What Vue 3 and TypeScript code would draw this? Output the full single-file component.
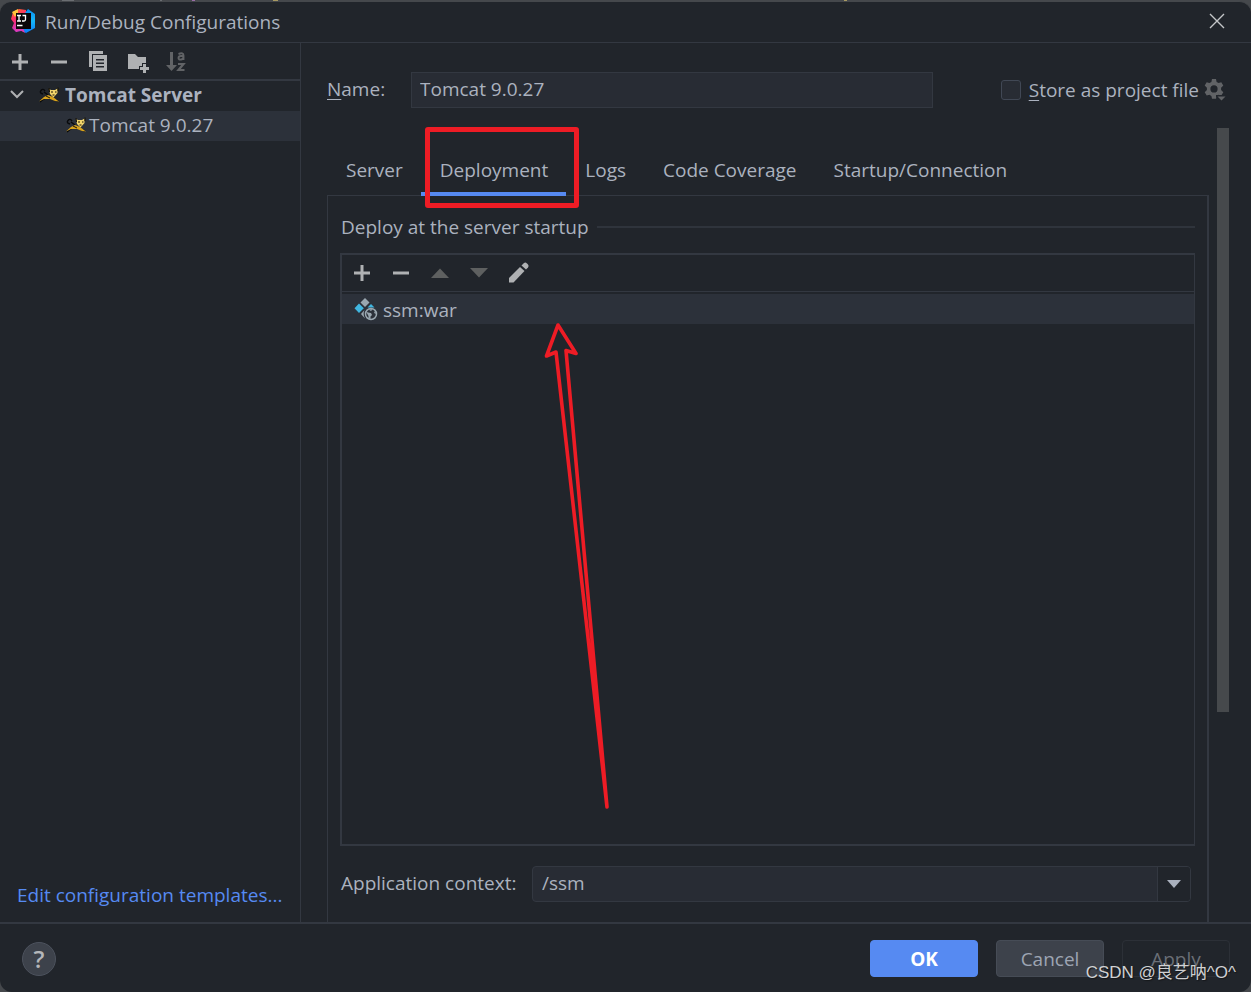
<script setup lang="ts">
import { ref } from 'vue'

const tabs: string[] = ['Server', 'Deployment', 'Logs', 'Code Coverage', 'Startup/Connection']
const activeTab = ref<string>('Deployment')
const configName = ref<string>('Tomcat 9.0.27')
const contextPath = ref<string>('/ssm')
const storeAsFile = ref<boolean>(false)
</script>

<template>
  <div class="screen">
    <div class="behind" aria-hidden="true"><i class="m1"></i><i class="m2"></i><i class="m3"></i><i class="m4"></i><i class="m5"></i></div>
    <div class="dialog">
      <header class="titlebar">
        <svg class="logo" width="26" height="26" viewBox="0 0 26 26" aria-hidden="true">
          <defs>
            <linearGradient id="ij-warm" x1="0" y1="0" x2="0.4" y2="1">
              <stop offset="0" stop-color="#fc801d" />
              <stop offset="0.45" stop-color="#fe2d6a" />
              <stop offset="1" stop-color="#c13bd6" />
            </linearGradient>
            <linearGradient id="ij-cool" x1="0" y1="0" x2="0" y2="1">
              <stop offset="0" stop-color="#0a8ef0" />
              <stop offset="0.5" stop-color="#16b7f8" />
              <stop offset="1" stop-color="#087cfa" />
            </linearGradient>
          </defs>
          <path d="M3 3 9 0 16 1 17 23 11 22 6 23 2 19 4 14 1 10Z" fill="url(#ij-warm)" />
          <path d="M2 3 8 0 8 4 5 8Z" fill="#ffc53b" />
          <path d="M15 4 18 0 25 5 25 19 16 24 11 21 15 17Z" fill="url(#ij-cool)" />
          <path d="M5 19 13 19 15 24 10 21 6 23Z" fill="#e33bb0" />
          <rect x="6" y="4" width="15" height="16" fill="#0b0609" />
          <path d="M7 6.500H11M9 6.500V12M7 12H11M12.500 6.500H15.500V10.500Q15.500 12 14 12H12M7 16.500H12.500" fill="none" stroke="#fff" stroke-width="1.300" />
        </svg>
        <h1>Run/Debug Configurations</h1>
        <button class="icon-btn close" type="button" aria-label="Close">
          <svg width="16" height="16" viewBox="0 0 16 16"><path d="M1 1 15 15M15 1 1 15" stroke="#c4c6c9" stroke-width="1.400" fill="none" /></svg>
        </button>
      </header>

      <div class="body">
        <aside class="sidebar">
          <div class="side-tools">
            <button class="icon-btn" type="button" aria-label="Add">
              <svg width="24" height="24" viewBox="0 0 24 24"><path d="M12 4V20M4 12H20" stroke="#afb1b3" stroke-width="3" /></svg>
            </button>
            <button class="icon-btn" type="button" aria-label="Remove">
              <svg width="24" height="24" viewBox="0 0 24 24"><path d="M4 12H20" stroke="#afb1b3" stroke-width="3" /></svg>
            </button>
            <button class="icon-btn" type="button" aria-label="Copy">
              <svg width="24" height="24" viewBox="0 0 24 24">
                <path d="M3 1H17V4H6V17H3Z" fill="#afb1b3" />
                <path fill-rule="evenodd" d="M7 5H21V21H7ZM10 9V10.500H18V9ZM10 12.500V14H18V12.500ZM10 16V17.500H18V16Z" fill="#afb1b3" />
              </svg>
            </button>
            <button class="icon-btn" type="button" aria-label="New folder">
              <svg width="24" height="24" viewBox="0 0 24 24">
                <path d="M3 4H10L13 7H21V13H17V16H14V19H3Z" fill="#afb1b3" />
                <path d="M19.500 14V23M15 18.500H24" stroke="#afb1b3" stroke-width="3" />
              </svg>
            </button>
            <button class="icon-btn" type="button" aria-label="Sort alphabetically" disabled>
              <svg width="24" height="24" viewBox="0 0 24 24" fill="none" stroke="#616366">
                <path d="M7.500 2V16" stroke-width="3" />
                <path d="M2 15H13L7.500 21Z" fill="#616366" stroke="none" />
                <path d="M14.500 4Q19.500 2 19.500 5.500V10M19.500 6H17Q14.500 6 14.500 8T17 9.500Q19 9.500 19 7.500" stroke-width="1.900" />
                <path d="M14 14H19.500L14.500 20H20.500" stroke-width="2.200" />
              </svg>
            </button>
          </div>

          <svg class="symbols" width="0" height="0" aria-hidden="true">
            <symbol id="tomcat" viewBox="0 0 20 16">
              <path d="M4 7Q0 6 2 3.500T6 4M5 5 9 8M1 15 6 11M14 12 19 14" stroke="#08090b" stroke-width="1.400" fill="none" />
              <path d="M0 14.500 5 10 9 8 14 10 20 14.500 16 14 11 12 5 12Z" fill="#d9a31c" />
              <path d="M10 2 12 3H16L18.500 1.500 18.500 6 14.500 10.500 11 7Z" fill="#f2d56c" />
              <path d="M10 1 10.500 5M19 0.500V4M12 5H14M16 5H17.500M13.500 8H15.500" stroke="#191305" stroke-width="1.100" />
              <path d="M7 9 11 11" stroke="#17120a" stroke-width="1" />
            </symbol>
          </svg>
          <ul class="tree">
            <li>
              <div class="tree-row group">
                <button class="icon-btn chevron" type="button" aria-label="Collapse Tomcat Server" aria-expanded="true">
                  <svg width="14" height="14" viewBox="0 0 14 14"><path d="M1 3 7 9 13 3" stroke="#afb1b3" stroke-width="2" fill="none" /></svg>
                </button>
                <svg width="20" height="16"><use href="#tomcat" /></svg>
                <span>Tomcat Server</span>
              </div>
              <ul class="tree">
                <li class="tree-row leaf">
                  <svg width="20" height="16"><use href="#tomcat" /></svg>
                  <span>Tomcat 9.0.27</span>
                </li>
              </ul>
            </li>
          </ul>
          <a class="templates" href="#">Edit configuration templates...</a>
        </aside>

        <main class="content">
          <div class="name-row">
            <label class="name-label" for="config-name"><u>N</u>ame:</label>
            <input id="config-name" v-model="configName" class="text-field" type="text" />
            <div class="store">
              <input id="store-file" v-model="storeAsFile" type="checkbox" />
              <label for="store-file"><u>S</u>tore as project file</label>
              <button class="icon-btn" type="button" aria-label="Storage options">
                <svg width="22" height="22" viewBox="0 0 22 22">
                  <g fill="#616366">
                    <path fill-rule="evenodd" d="M8 0H12L12.600 3 14.600 4.100 17.300 3.200 19.300 6.600 17.100 8.700V11.100L19.300 13.200 17.300 16.600 14.600 15.700 12.600 16.900 12 19.800H8L7.400 16.900 5.400 15.700 2.700 16.600 0.700 13.200 2.900 11.100V8.700L0.700 6.600 2.700 3.200 5.400 4.100 7.400 3ZM10 6.300A3.600 3.600 0 1 0 10 13.500A3.600 3.600 0 1 0 10 6.300Z" />
                    <path d="M12 16H22V18L17.500 22 12 18Z" fill="#21252b" />
                    <path d="M13.500 17.500H21.500L17.500 21.500Z" />
                  </g>
                </svg>
              </button>
            </div>
          </div>

          <div class="scroll-area">
            <div class="pane">
              <div class="tabs" role="tablist">
                <button
                  v-for="tab in tabs"
                  :key="tab"
                  class="tab"
                  :class="{ active: tab === activeTab }"
                  type="button"
                  role="tab"
                  :aria-selected="tab === activeTab"
                  @click="activeTab = tab"
                >
                  {{ tab }}
                  <span v-if="tab === 'Deployment'" class="red-box"></span>
                </button>
              </div>

              <section class="panel">
                <h2>Deploy at the server startup</h2>
                <div class="deploy-box">
                  <div class="deploy-tools">
                    <button class="icon-btn" type="button" aria-label="Add artifact">
                      <svg width="24" height="24" viewBox="0 0 24 24"><path d="M12 4V20M4 12H20" stroke="#afb1b3" stroke-width="3" /></svg>
                    </button>
                    <button class="icon-btn" type="button" aria-label="Remove artifact">
                      <svg width="24" height="24" viewBox="0 0 24 24"><path d="M4 12H20" stroke="#afb1b3" stroke-width="3" /></svg>
                    </button>
                    <button class="icon-btn" type="button" aria-label="Move up" disabled>
                      <svg width="24" height="24" viewBox="0 0 24 24"><path d="M3 17 12 7.500 21 17Z" fill="#5e6060" /></svg>
                    </button>
                    <button class="icon-btn" type="button" aria-label="Move down" disabled>
                      <svg width="24" height="24" viewBox="0 0 24 24"><path d="M3 7H21L12 16.500Z" fill="#5e6060" /></svg>
                    </button>
                    <button class="icon-btn" type="button" aria-label="Edit artifact">
                      <svg width="24" height="24" viewBox="0 0 24 24" fill="#afb1b3">
                        <path d="M3 17 14 6 18.500 10 7.500 21.500H3Z" />
                        <path d="M15.500 4.500 18 2Q19.500 1 21 2.500L22 3.500Q23.300 5 22 6.500L20 8.500Z" />
                      </svg>
                    </button>
                  </div>
                  <ul class="artifacts">
                    <li>
                      <svg width="24" height="24" viewBox="0 0 24 24" aria-hidden="true">
                        <path d="M11 0 15.500 4.500 11 9 6.500 4.500Z" fill="#9aa7b0" />
                        <path d="M5 5.500 9.800 10.300 5 15 0.500 10.300Z" fill="#40b6e0" />
                        <path d="M17 6 20.500 9.500H13.500Z" fill="#40b6e0" />
                        <path d="M10.500 12Q8.500 16 11 20.500L7 16Z" fill="#9aa7b0" />
                        <circle cx="17" cy="16" r="5.500" fill="#2c313a" stroke="#9aa7b0" stroke-width="1.500" />
                        <path d="M12 13.500 14 14.500 17 15 18 17 16.500 18.500 16.500 21 14.500 20.500 14.500 18ZM14.500 11.500 19 11 17 13ZM21 13 22.500 16 20 15Z" fill="#9aa7b0" />
                      </svg>
                      <span>ssm:war</span>
                    </li>
                  </ul>
                  <svg class="arrow" width="70" height="492" viewBox="0 0 70 492" aria-hidden="true">
                    <path d="M65 487 14 32 4.500 36 16 5 34 33.500 24 30.500Z" fill="none" stroke="#ee1c25" stroke-width="3.600" stroke-linejoin="round" />
                  </svg>
                </div>
                <div class="context-row">
                  <label for="context">Application context:</label>
                  <div class="combo">
                    <input id="context" v-model="contextPath" type="text" />
                    <button type="button" aria-label="Show contexts">
                      <svg width="14" height="8" viewBox="0 0 14 8"><path d="M0 0H14L7 8Z" fill="#abb2bf" /></svg>
                    </button>
                  </div>
                </div>
              </section>
            </div>
            <div class="scrollbar"><div class="thumb"></div></div>
          </div>
        </main>
      </div>

      <footer class="footer">
        <button class="help" type="button" aria-label="Help">?</button>
        <button class="btn primary" type="button">OK</button>
        <button class="btn" type="button">Cancel</button>
        <button class="btn disabled" type="button" disabled>Apply</button>
      </footer>
    </div>
    <div class="watermark">CSDN @良艺呐^O^</div>
  </div>
</template>

<style>
body {
  margin: 0;
  background: #45484c;
}
</style>

<style scoped>
.screen {
  --bg: #21252b;
  --line: #333841;
  --fg: #abb2bf;
  --accent: #568af2;
  position: relative;
  box-sizing: border-box;
  display: flex;
  flex-direction: column;
  min-height: 100vh;
  background: #45484c;
  color: var(--fg);
  font: 19px/28px "Open Sans", "Noto Sans", "Noto Sans CJK SC", sans-serif;
}
.screen *,
.screen *::before,
.screen *::after {
  box-sizing: border-box;
}
.behind {
  display: flex;
  height: 1px;
}
.behind i {
  width: 12px;
  height: 1px;
  background: #6b6e72;
}
.behind .m1 { margin-left: 62px; }
.behind .m2 { margin-left: 86px; width: 2px; }
.behind .m3 { margin-left: 30px; width: 3px; background: #9a6da8; }
.behind .m4 { margin-left: 78px; width: 5px; background: #a89a62; }
.behind .m5 { margin-left: 566px; width: 3px; background: #a89a62; }
button,
input {
  margin: 0;
  padding: 0;
  border: 0;
  background: none;
  color: inherit;
  font: inherit;
  outline: none;
}
svg {
  display: block;
  flex: none;
}
.symbols {
  position: absolute;
}
ul {
  margin: 0;
  padding: 0;
  list-style: none;
}
h1,
h2 {
  margin: 0;
  font-size: 19px;
  font-weight: 400;
}
u {
  text-underline-offset: 3px;
}
.icon-btn {
  display: flex;
  align-items: center;
  justify-content: center;
}
.dialog {
  display: flex;
  flex: 1;
  flex-direction: column;
  border-top: 1px solid #45484c;
  border-radius: 12px;
  background: var(--bg);
  overflow: hidden;
}
.titlebar {
  display: flex;
  align-items: center;
  height: 41px;
  padding: 0 26px 0 10px;
  border-bottom: 1px solid var(--line);
}
.titlebar h1 {
  margin-left: 9px;
}
.close {
  margin-left: auto;
  padding-bottom: 2px;
}
.body {
  display: flex;
  flex: 1;
}
.sidebar {
  display: flex;
  flex-direction: column;
  width: 301px;
  border-right: 1px solid var(--line);
}
.side-tools {
  display: flex;
  gap: 15px;
  align-items: center;
  height: 38px;
  padding: 2px 0 0 8px;
  border-bottom: 2px solid var(--line);
}
.tree-row {
  display: flex;
  align-items: center;
  height: 30px;
  padding-bottom: 2px;
}
.group {
  padding-left: 10px;
  font-weight: 700;
}
.group span {
  margin-left: 6px;
}
.chevron {
  margin-right: 15px;
}
.leaf {
  padding-left: 66px;
  background: #2c313a;
}
.leaf span {
  margin-left: 3px;
}
.templates {
  margin: auto 0 13px 17px;
  color: var(--accent);
  text-decoration: none;
}
.content {
  display: flex;
  flex: 1;
  flex-direction: column;
  min-width: 0;
  padding: 29px 22px 0 26px;
}
.name-row {
  display: flex;
  align-items: center;
}
.name-label {
  width: 84px;
  padding-bottom: 2px;
}
.text-field {
  flex: 1;
  min-width: 0;
  height: 36px;
  padding: 0 8px 2px;
  border: 1px solid var(--line);
  background: #282c34;
}
.store {
  display: flex;
  align-items: center;
  margin: 0 3px 0 68px;
}
.store input {
  width: 20px;
  height: 20px;
  margin-right: 8px;
  border: 1px solid #414855;
  border-radius: 3px;
  background: #282c34;
  appearance: none;
}
.store input:checked {
  background: var(--accent);
}
.store button {
  margin-left: 5px;
}
.scroll-area {
  display: flex;
  flex: 1;
  gap: 8px;
  margin-top: 20px;
}
.pane {
  display: flex;
  flex: 1;
  flex-direction: column;
  min-width: 0;
}
.scrollbar {
  width: 12px;
}
.thumb {
  height: 584px;
  background: #46494c;
}
.tabs {
  display: flex;
  height: 68px;
  padding-top: 20px;
}
.tab {
  position: relative;
  padding: 0 18px 0 19px;
  border-bottom: 4px solid transparent;
}
.tab.active {
  z-index: 1;
  border-bottom-color: var(--accent);
}
.red-box {
  position: absolute;
  top: -21px;
  right: -13px;
  bottom: -16px;
  left: 4px;
  border: 5px solid #ee1c25;
  border-radius: 3px;
}
.panel {
  display: flex;
  flex: 1;
  flex-direction: column;
  margin-top: -1px;
  padding: 17px 12px 20px;
  border: 1px solid var(--line);
  border-right-width: 2px;
  border-bottom: 0;
}
.panel h2 {
  display: flex;
  gap: 8px;
  align-items: center;
  padding-left: 1px;
}
.panel h2::after {
  flex: 1;
  height: 2px;
  background: #2f343c;
  content: "";
}
.deploy-box {
  position: relative;
  flex: 1;
  min-height: 560px;
  margin: 12px 0 20px;
  border: 2px solid var(--line);
  border-right-width: 1px;
}
.deploy-tools {
  display: flex;
  gap: 15px;
  align-items: center;
  height: 37px;
  padding-left: 8px;
  border-bottom: 1px solid var(--line);
}
.artifacts {
  padding-top: 2px;
}
.artifacts li {
  display: flex;
  gap: 5px;
  align-items: center;
  height: 30px;
  padding: 2px 0 0 12px;
  background: #2c313a;
}
.arrow {
  position: absolute;
  top: 65px;
  left: 200px;
}
.context-row {
  display: flex;
  align-items: center;
  padding: 0 4px 0 1px;
}
.context-row label {
  width: 191px;
  padding-bottom: 2px;
}
.combo {
  display: flex;
  flex: 1;
  min-width: 0;
  height: 36px;
  border: 1px solid var(--line);
  border-radius: 4px;
  background: #282c34;
  overflow: hidden;
}
.combo input {
  flex: 1;
  min-width: 0;
  padding: 0 9px 2px;
}
.combo button {
  display: flex;
  align-items: center;
  justify-content: center;
  width: 33px;
  border-left: 1px solid var(--line);
  background: var(--bg);
}
.footer {
  display: flex;
  gap: 18px;
  align-items: center;
  height: 70px;
  padding: 1px 21px 0 22px;
  border-top: 2px solid var(--line);
}
.help {
  width: 34px;
  height: 34px;
  margin-right: auto;
  border: 1px solid #4c525d;
  border-radius: 50%;
  background: #3d424b;
  color: #b5b7ba;
  font-size: 24px;
  font-weight: 600;
}
.btn {
  width: 108px;
  height: 37px;
  border: 1px solid #464c56;
  border-radius: 4px;
  background: #3d424b;
  color: #9da5b3;
}
.primary {
  border-color: var(--accent);
  background: var(--accent);
  color: #fff;
  font-weight: 700;
}
.disabled {
  border-color: #2c3037;
  background: none;
  color: #6b6f77;
}
.watermark {
  position: absolute;
  right: 15px;
  bottom: 5px;
  color: #d0d1d3;
  font: 17px/28px "Liberation Sans", "Noto Sans CJK SC", sans-serif;
  text-shadow: 1px 1px 1px #15171a;
}
</style>
